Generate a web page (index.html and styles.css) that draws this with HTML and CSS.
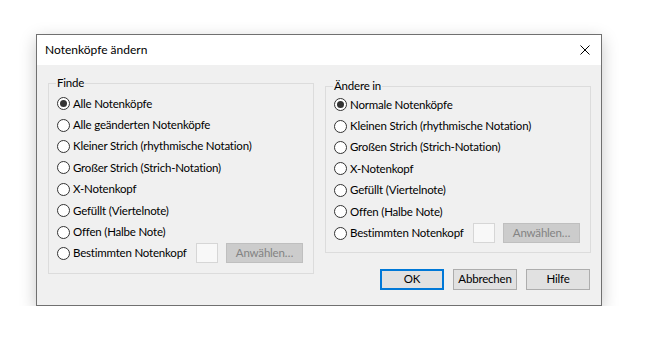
FILE: index.html
```html
<!DOCTYPE html>
<html lang="de">
<head>
<meta charset="utf-8">
<title>Notenköpfe ändern</title>
<link rel="stylesheet" href="styles.css">
</head>
<body>
<div class="window">
  <div class="titlebar">
    <span class="title">Notenköpfe ändern</span>
    <span class="close" aria-label="Schließen">
      <svg width="10" height="10" viewBox="0 0 10 10"><path d="M0.5 0.5 L9.5 9.5 M9.5 0.5 L0.5 9.5" stroke="#000" stroke-width="1" fill="none"/></svg>
    </span>
  </div>
  <div class="content">
    <fieldset class="group group-left">
      <legend>Finde</legend>
      <div class="row"><span class="radio checked"></span><span class="label">Alle Notenköpfe</span></div>
      <div class="row"><span class="radio"></span><span class="label">Alle geänderten Notenköpfe</span></div>
      <div class="row"><span class="radio"></span><span class="label">Kleiner Strich (rhythmische Notation)</span></div>
      <div class="row"><span class="radio"></span><span class="label">Großer Strich (Strich-Notation)</span></div>
      <div class="row"><span class="radio"></span><span class="label">X-Notenkopf</span></div>
      <div class="row"><span class="radio"></span><span class="label">Gefüllt (Viertelnote)</span></div>
      <div class="row"><span class="radio"></span><span class="label">Offen (Halbe Note)</span></div>
      <div class="row"><span class="pick"><span class="radio"></span><span class="label">Bestimmten Notenkopf</span></span><span class="swatch"></span><span class="btn disabled">Anwählen…</span></div>
    </fieldset>
    <div class="right-col">
      <fieldset class="group group-right">
        <legend>Ändere in</legend>
        <div class="row"><span class="radio checked"></span><span class="label">Normale Notenköpfe</span></div>
        <div class="row"><span class="radio"></span><span class="label">Kleinen Strich (rhythmische Notation)</span></div>
        <div class="row"><span class="radio"></span><span class="label">Großen Strich (Strich-Notation)</span></div>
        <div class="row"><span class="radio"></span><span class="label">X-Notenkopf</span></div>
        <div class="row"><span class="radio"></span><span class="label">Gefüllt (Viertelnote)</span></div>
        <div class="row"><span class="radio"></span><span class="label">Offen (Halbe Note)</span></div>
        <div class="row"><span class="pick"><span class="radio"></span><span class="label">Bestimmten Notenkopf</span></span><span class="swatch"></span><span class="btn disabled">Anwählen…</span></div>
      </fieldset>
      <div class="buttons">
        <span class="btn default">OK</span>
        <span class="btn">Abbrechen</span>
        <span class="btn">Hilfe</span>
      </div>
    </div>
  </div>
</div>
</body>
</html>
```
FILE: styles.css
```css
html, body {
  margin: 0;
  padding: 0;
  background: #ffffff;
}
body {
  font-family: Lato, "Liberation Sans", sans-serif;
  font-size: 11.5px;
  letter-spacing: -0.2px;
  color: #000;
  padding: 34px 0 0 36px;
}
.window {
  box-sizing: border-box;
  width: 566px;
  height: 272px;
  border: 1px solid #707070;
  background: #f0f0f0;
  box-shadow: 0 5px 16px rgba(0,0,0,0.22);
  display: flex;
  flex-direction: column;
}
.titlebar {
  height: 30px;
  background: #ffffff;
  display: flex;
  align-items: center;
  justify-content: space-between;
  padding: 0 10px 0 8px;
}
.title {
  font-size: 12px;
  letter-spacing: 0;
  line-height: 16px;
}
.close {
  display: flex;
  width: 10px;
  height: 10px;
  margin-right: 1px;
}
.content {
  display: flex;
  align-items: flex-start;
  gap: 11px;
  padding: 10px 10px 0 11px;
}
.group {
  box-sizing: border-box;
  width: 266px;
  margin: 0;
  border: 1px solid #dcdcdc;
  padding: 2px 8px 9px 8px;
  min-width: 0;
}
.group legend {
  padding: 0 1px;
  margin-left: -1px;
  line-height: 16px;
}
.right-col {
  display: flex;
  flex-direction: column;
  padding-top: 3px;
}
.group-right {
  padding-top: 0;
  padding-bottom: 8px;
}
.row {
  height: 21.4px;
  display: flex;
  align-items: center;
}
.pick {
  width: 139px;
  display: flex;
  align-items: center;
}
.radio {
  box-sizing: border-box;
  width: 13px;
  height: 13px;
  border: 1px solid #333;
  border-radius: 50%;
  background: #fff;
  margin-right: 3px;
  flex: none;
  position: relative;
}
.radio.checked::after {
  content: "";
  position: absolute;
  left: 2px;
  top: 2px;
  width: 7px;
  height: 7px;
  border-radius: 50%;
  background: #333;
}
.label {
  white-space: nowrap;
  line-height: 16px;
}
.swatch {
  box-sizing: border-box;
  width: 22px;
  height: 20px;
  border: 1px solid #d6d6d6;
  background: #f8f8f8;
  margin-right: 8px;
}
.btn {
  box-sizing: border-box;
  display: flex;
  align-items: center;
  justify-content: center;
  height: 21px;
  width: 64px;
  border: 1px solid #adadad;
  background: #e1e1e1;
  line-height: 16px;
}
.btn.disabled {
  width: 77px;
  height: 20px;
  background: #cccccc;
  border-color: #bfbfbf;
  color: #838383;
}
.btn.default {
  border: 2px solid #0078d7;
}
.buttons {
  display: flex;
  justify-content: flex-end;
  gap: 9px;
  margin-top: 16px;
  padding-right: 1px;
}
```
